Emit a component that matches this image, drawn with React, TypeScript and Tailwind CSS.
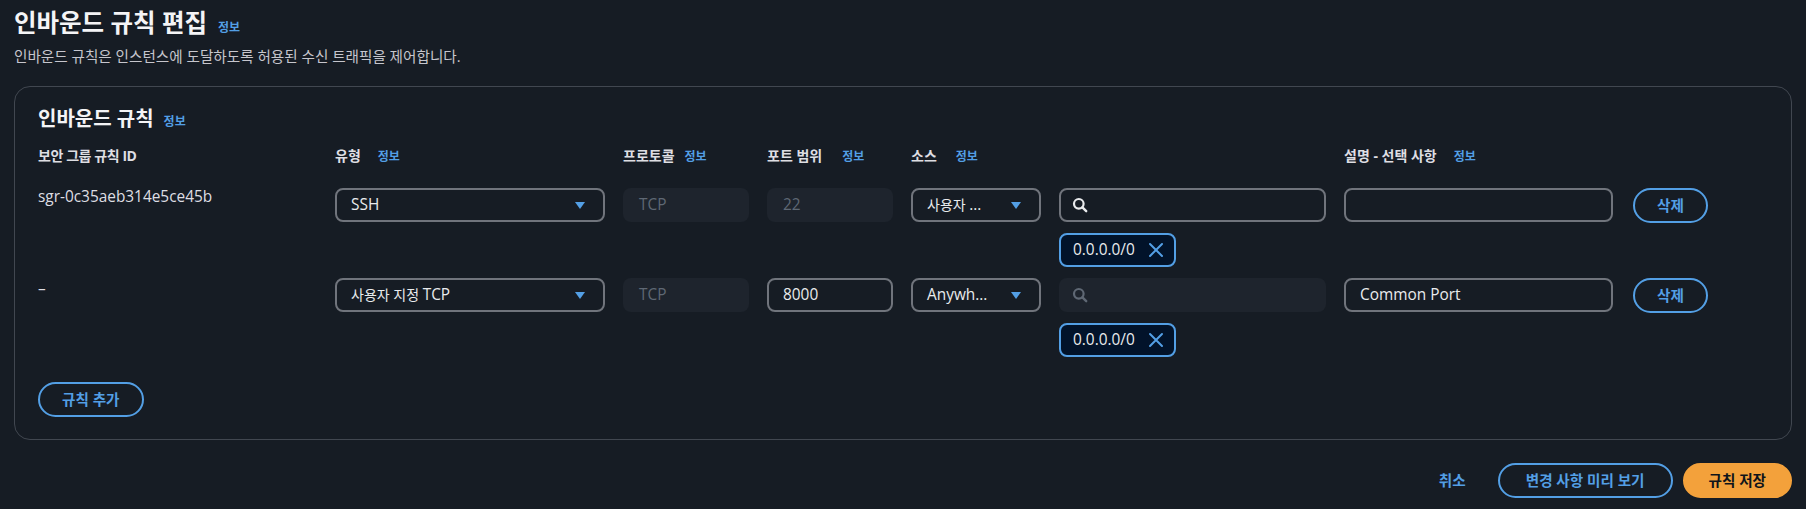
import React from "react";

const BLUE = "#539fe5";

function L({ children }: { children: React.ReactNode }) {
  return <span className="text-[15.4px]">{children}</span>;
}

function Caret() {
  return (
    <svg width="14" height="14" viewBox="0 0 14 14" className="shrink-0">
      <path d="M2 4h10l-5 7z" fill={BLUE} />
    </svg>
  );
}

function SearchIcon({ color }: { color: string }) {
  return (
    <svg width="16" height="16" viewBox="0 0 16 16" className="shrink-0">
      <circle cx="6.8" cy="6.8" r="4.8" fill="none" stroke={color} strokeWidth="2.2" />
      <path d="M10.4 10.4l3.8 3.8" stroke={color} strokeWidth="2.4" strokeLinecap="round" />
    </svg>
  );
}

function XIcon() {
  return (
    <svg width="18" height="18" viewBox="0 0 18 18" className="shrink-0">
      <path d="M3 3l12 12M15 3L3 15" stroke={BLUE} strokeWidth="2" strokeLinecap="round" />
    </svg>
  );
}

function Select({ children }: { children: React.ReactNode }) {
  return (
    <div className="h-[34px] border-2 border-[#70747c] rounded-[8px] pl-[14px] pr-[16px] flex items-center justify-between text-[14px] leading-[20px] text-[#e9ebed]">
      <span className="whitespace-nowrap">{children}</span>
      <Caret />
    </div>
  );
}

function Disabled({ value }: { value: string }) {
  return (
    <div className="h-[34px] bg-[#1e242d] rounded-[8px] pl-[16px] flex items-center text-[15.4px] leading-[20px] text-[#5f6874]">
      {value}
    </div>
  );
}

function Input({ value }: { value: string }) {
  return (
    <div className="h-[34px] border-2 border-[#70747c] rounded-[8px] pl-[14px] flex items-center text-[15.4px] leading-[20px] text-[#e9ebed]">
      {value}
    </div>
  );
}

function Chip() {
  return (
    <div className="mt-[11px] h-[34px] w-[117px] border-2 border-[#539fe5] bg-[#02132a] rounded-[8px] pl-[12px] pr-[9px] flex items-center justify-between text-[15.4px] leading-[20px] text-[#e9ebed]">
      <span>0.0.0.0/0</span>
      <XIcon />
    </div>
  );
}

function OutlineButton({ children, className = "" }: { children: React.ReactNode; className?: string }) {
  return (
    <button className={"h-[35px] border-2 border-[#539fe5] rounded-full flex items-center text-[14.6px] font-bold text-[#539fe5] whitespace-nowrap " + className}>
      {children}
    </button>
  );
}

function Info({ className = "" }: { className?: string }) {
  return <span className={"text-[12px] font-bold text-[#539fe5] " + className}>정보</span>;
}

function Header({ label, ml }: { label: string; ml: string }) {
  return (
    <div className="flex items-baseline text-[14px] leading-[20px] font-bold text-[#dedee3] whitespace-nowrap">
      <span>{label}</span>
      <Info className={ml} />
    </div>
  );
}

const GRID = "grid grid-cols-[279px_270px_126px_126px_130px_267px_269px_auto] gap-x-[18px]";

export default function App() {
  return (
    <div className="w-full h-[509px] bg-[#161c24] px-[14px] pt-[8px] font-['Open_Sans','Noto_Sans_CJK_KR',sans-serif] overflow-hidden">
      <div className="flex items-baseline">
        <h1 className="text-[24.5px] leading-[30px] font-bold text-[#f4f4f6]">인바운드 규칙 편집</h1>
        <Info className="ml-[11px]" />
      </div>
      <p className="mt-[8px] text-[14.6px] leading-[20px] text-[#c6c6cd]">
        인바운드 규칙은 인스턴스에 도달하도록 허용된 수신 트래픽을 제어합니다.
      </p>

      <div className="mt-[20px] border border-[#414750] rounded-[16px] pt-[18px] pb-[22px] pl-[23px]">
        <div className="flex items-baseline h-[28px]">
          <h2 className="text-[20px] leading-[28px] font-bold text-[#f4f4f6]">인바운드 규칙</h2>
          <Info className="ml-[10px]" />
        </div>

        <div className={GRID + " mt-[13px]"}>
          <div className="text-[14px] leading-[20px] font-bold text-[#dedee3] tracking-[-0.03em]">보안 그룹 규칙 ID</div>
          <Header label="유형" ml="ml-[17px]" />
          <Header label="프로토콜" ml="ml-[10px]" />
          <Header label="포트 범위" ml="ml-[20px]" />
          <Header label="소스" ml="ml-[19px]" />
          <div />
          <Header label="설명 - 선택 사항" ml="ml-[17px]" />
          <div />
        </div>

        <div className="mt-[21px] flex flex-col gap-y-[11px]">
          <div className={GRID + " items-start"}>
            <div className="-mt-[2px] text-[15.4px] leading-[22px] text-[#dedee3]">sgr-0c35aeb314e5ce45b</div>
            <Select><L>SSH</L></Select>
            <Disabled value="TCP" />
            <Disabled value="22" />
            <Select>사용자 <L>...</L></Select>
            <div>
              <div className="h-[34px] border-2 border-[#70747c] rounded-[8px] pl-[11px] flex items-center">
                <SearchIcon color="#e9ebed" />
              </div>
              <Chip />
            </div>
            <div className="h-[34px] border-2 border-[#70747c] rounded-[8px]" />
            <OutlineButton className="ml-[2px] h-[34px] px-[22px] justify-self-start">삭제</OutlineButton>
          </div>

          <div className={GRID + " items-start"}>
            <div className="text-[15.4px] leading-[22px] text-[#dedee3]">–</div>
            <Select>사용자 지정 <L>TCP</L></Select>
            <Disabled value="TCP" />
            <Input value="8000" />
            <Select><L>Anywh...</L></Select>
            <div>
              <div className="h-[34px] bg-[#1e242d] rounded-[8px] pl-[13px] flex items-center">
                <SearchIcon color="#5f6874" />
              </div>
              <Chip />
            </div>
            <Input value="Common Port" />
            <OutlineButton className="ml-[2px] h-[34px] px-[22px] justify-self-start">삭제</OutlineButton>
          </div>
        </div>

        <div className="mt-[25px] flex">
          <OutlineButton className="px-[22px]">규칙 추가</OutlineButton>
        </div>
      </div>

      <div className="mt-[23px] flex justify-end items-center gap-x-[10px]">
        <button className="h-[35px] px-[22px] text-[14.6px] font-bold text-[#539fe5]">취소</button>
        <OutlineButton className="px-[26px]">변경 사항 미리 보기</OutlineButton>
        <button className="h-[35px] border-2 border-[#f3a13b] bg-[#f3a13b] rounded-full px-[24px] flex items-center text-[14.6px] font-bold text-[#0f141a]">
          규칙 저장
        </button>
      </div>
    </div>
  );
}
